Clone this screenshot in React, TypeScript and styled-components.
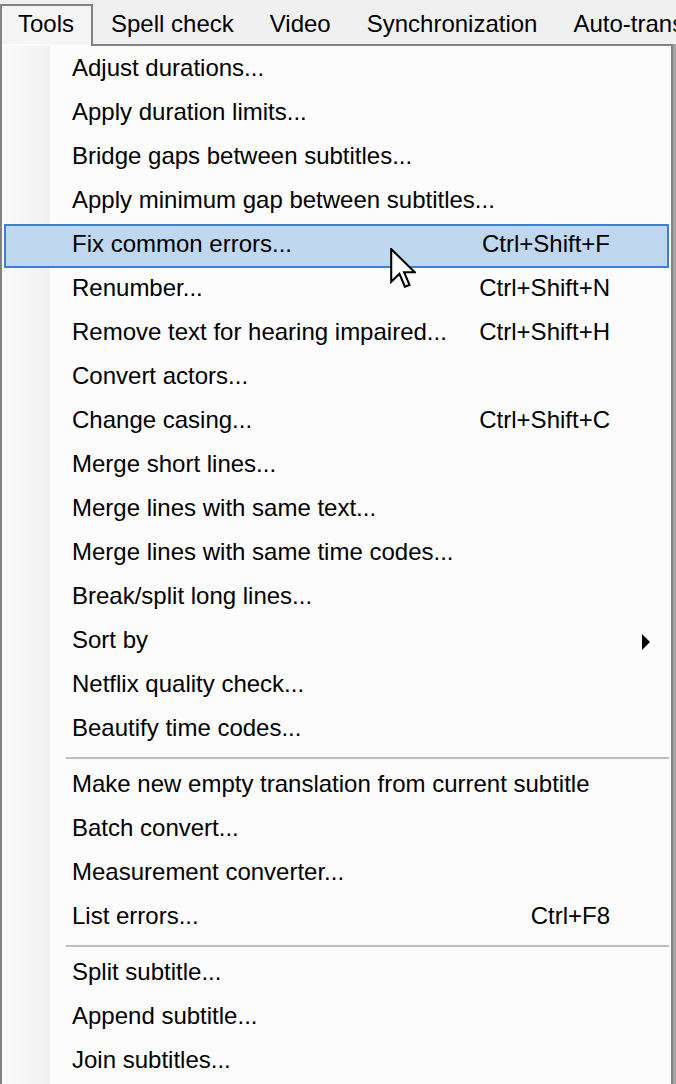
import React from "react";
import styled, { createGlobalStyle } from "styled-components";

const Global = createGlobalStyle`
  html, body { margin: 0; padding: 0; background: #f0f0f0; }
  body { font-family: "Liberation Sans", Arial, sans-serif; }
`;

const Page = styled.div`
  position: relative;
  width: 676px;
  height: 1084px;
  overflow: hidden;
  background: #f0f0f0;
  font-family: "Liberation Sans", Arial, sans-serif;
  font-size: 24px;
  color: #000;
  display: flex;
  flex-direction: column;
`;

const MenuBar = styled.div`
  display: flex;
  align-items: flex-start;
  height: 44px;
  flex: none;
  padding-right: 0;
  background: #f0f0f0;
  white-space: nowrap;
`;

const TopItem = styled.div`
  flex: none;
  padding: 10px 18px 0;
  line-height: 28px;
  &:first-of-type {
    margin-left: 1px;
  }
`;

const ActiveTab = styled.div`
  position: relative;
  z-index: 1;
  flex: none;
  box-sizing: border-box;
  width: 93px;
  height: 42px;
  margin-top: 4px;
  margin-bottom: -2px;
  padding: 4px 0 0 16px;
  line-height: 28px;
  border: 2px solid #838383;
  border-bottom: none;
  background: linear-gradient(to bottom, #f5f5f5 0, #f5f5f5 38px, #fafafa 38px);
`;

const Body = styled.div`
  display: flex;
  flex: 1;
  min-height: 0;
`;

const Dropdown = styled.div`
  box-sizing: border-box;
  width: 673px;
  flex: none;
  border: 2px solid #838383;
  border-bottom: none;
  padding: 2px 0;
  background: linear-gradient(
    to right,
    #fafafa 0,
    #f1f1f1 48px,
    #fcfcfc 48px
  );
`;

const Backdrop = styled.div`
  flex: 1;
  background: #a3a3a3;
`;

const Row = styled.div<{ $active?: boolean }>`
  box-sizing: border-box;
  height: 44px;
  margin: 0 2px;
  border: 2px solid ${(p) => (p.$active ? "#3c7fd3" : "transparent")};
  background: ${(p) => (p.$active ? "#bfd7ef" : "transparent")};
  padding: 0 0 4px 66px;
  display: flex;
  align-items: center;
  line-height: 34px;
  white-space: nowrap;
`;

const Label = styled.span`
  flex: 1;
`;

const Shortcut = styled.span`
  text-align: right;
`;

const ArrowCell = styled.span`
  width: 57px;
  flex: none;
  display: flex;
  align-items: center;
  padding: 4px 0 0 32px;
  box-sizing: border-box;
`;

const Separator = styled.div`
  height: 12px;
  display: flex;
  align-items: center;
  padding: 0 2px 0 64px;
  box-sizing: border-box;
  &::after {
    content: "";
    flex: 1;
    height: 2px;
    margin-bottom: 1px;
    background: #bdbdbd;
  }
`;

const Cursor = styled.svg`
  position: absolute;
  left: 390px;
  top: 248px;
  z-index: 2;
`;

type Item = { label: string; shortcut?: string; active?: boolean; submenu?: boolean };

const groups: Item[][] = [
  [
    { label: "Adjust durations..." },
    { label: "Apply duration limits..." },
    { label: "Bridge gaps between subtitles..." },
    { label: "Apply minimum gap between subtitles..." },
    { label: "Fix common errors...", shortcut: "Ctrl+Shift+F", active: true },
    { label: "Renumber...", shortcut: "Ctrl+Shift+N" },
    { label: "Remove text for hearing impaired...", shortcut: "Ctrl+Shift+H" },
    { label: "Convert actors..." },
    { label: "Change casing...", shortcut: "Ctrl+Shift+C" },
    { label: "Merge short lines..." },
    { label: "Merge lines with same text..." },
    { label: "Merge lines with same time codes..." },
    { label: "Break/split long lines..." },
    { label: "Sort by", submenu: true },
    { label: "Netflix quality check..." },
    { label: "Beautify time codes..." },
  ],
  [
    { label: "Make new empty translation from current subtitle" },
    { label: "Batch convert..." },
    { label: "Measurement converter..." },
    { label: "List errors...", shortcut: "Ctrl+F8" },
  ],
  [
    { label: "Split subtitle..." },
    { label: "Append subtitle..." },
    { label: "Join subtitles..." },
  ],
];

const SubArrow = () => (
  <svg width="9" height="16" viewBox="0 0 9 16">
    <polygon points="0,0 8,8 0,16" fill="#000" />
  </svg>
);

export default function App() {
  return (
    <Page>
      <Global />
      <MenuBar>
        <ActiveTab>Tools</ActiveTab>
        <TopItem>Spell check</TopItem>
        <TopItem>Video</TopItem>
        <TopItem>Synchronization</TopItem>
        <TopItem>Auto-translate</TopItem>
      </MenuBar>
      <Body>
        <Dropdown>
          {groups.map((g, gi) => (
            <React.Fragment key={gi}>
              {gi > 0 && <Separator />}
              {g.map((it) => (
                <Row key={it.label} $active={it.active}>
                  <Label>{it.label}</Label>
                  <Shortcut>{it.shortcut ?? ""}</Shortcut>
                  <ArrowCell>{it.submenu ? <SubArrow /> : null}</ArrowCell>
                </Row>
              ))}
            </React.Fragment>
          ))}
        </Dropdown>
        <Backdrop />
      </Body>
      <Cursor width="26" height="40" viewBox="0 0 12.5 19.5">
        <path
          d="M0.5,0.5 L0.5,16.5 L4.5,12.6 L7.2,18.9 L9.4,18 L6.8,11.8 L12,11.8 Z"
          fill="#fff"
          stroke="#000"
          strokeWidth="1"
          strokeLinejoin="miter"
        />
      </Cursor>
    </Page>
  );
}
